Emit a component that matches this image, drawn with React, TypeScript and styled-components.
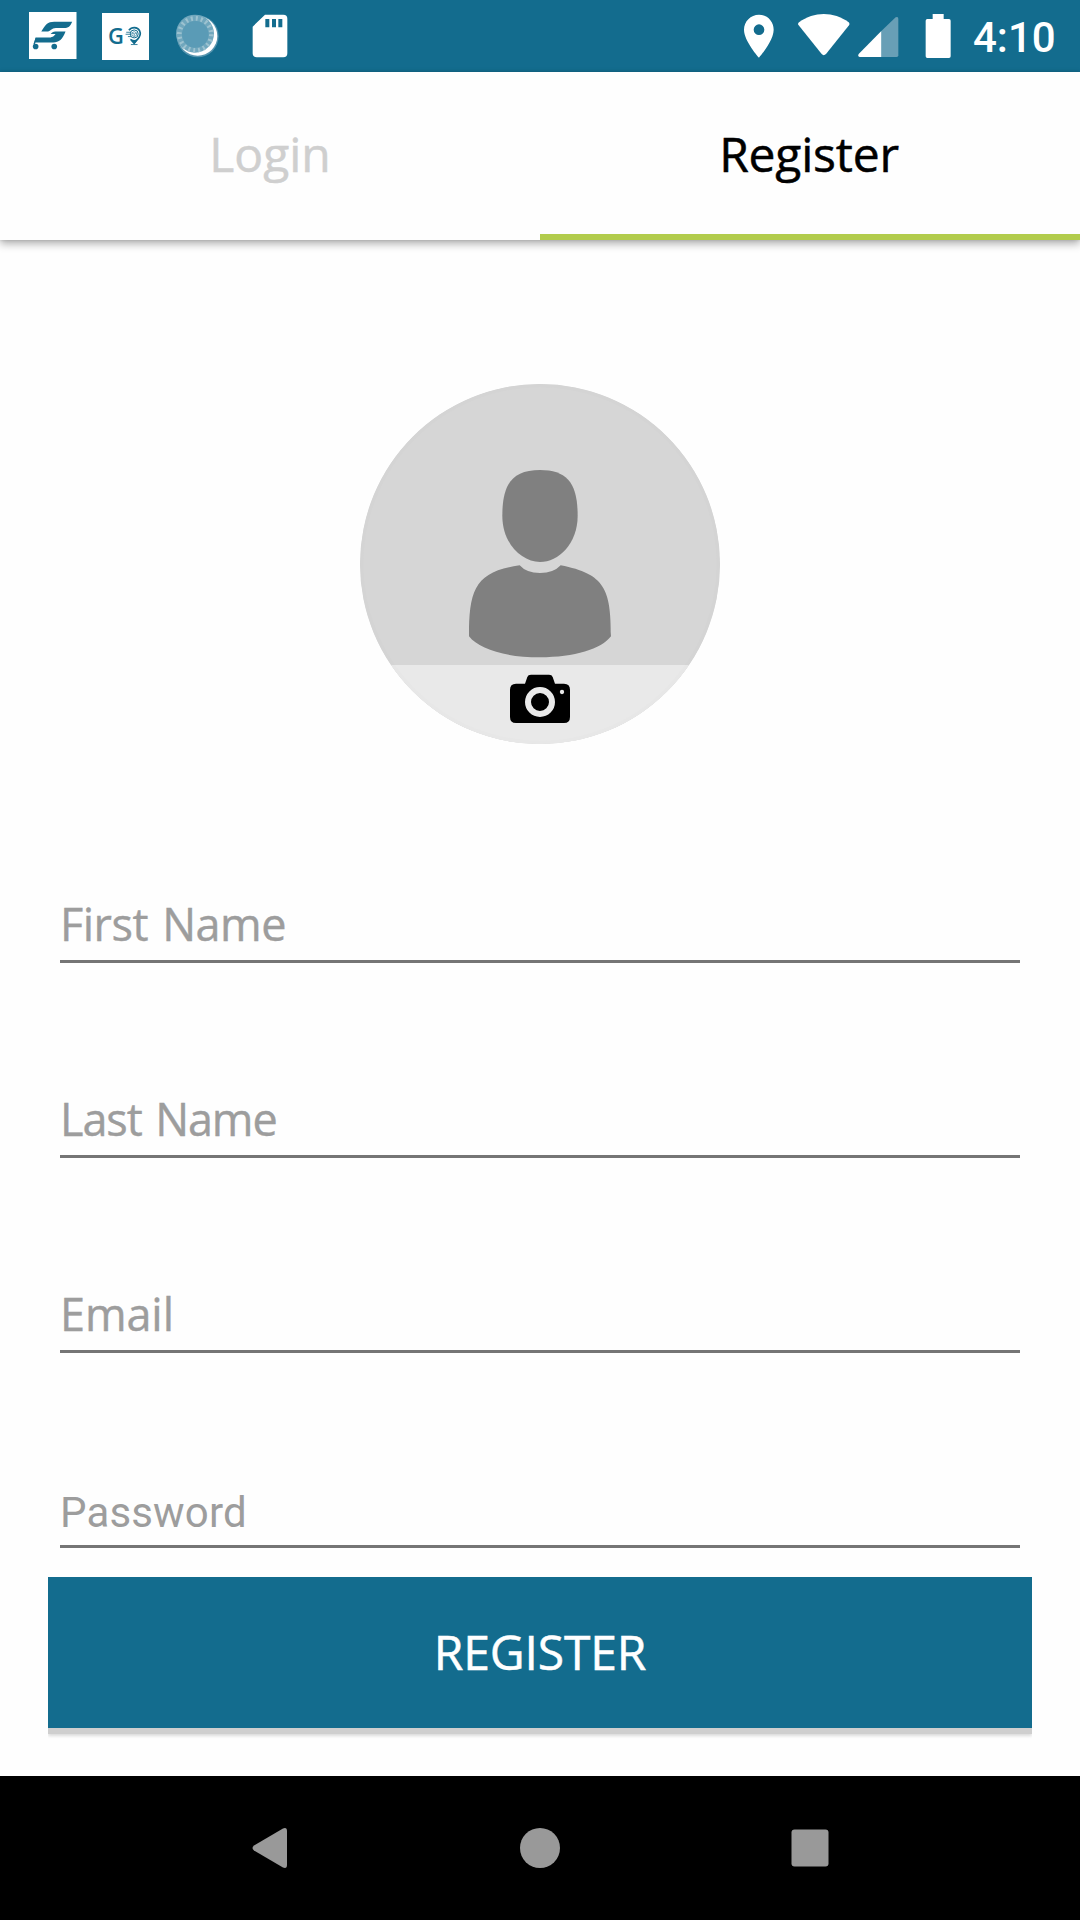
import React from 'react';
import styled, { createGlobalStyle } from 'styled-components';

const brand = '#136c8e';

const GlobalStyle = createGlobalStyle`
  * { box-sizing: border-box; }
  body { margin: 0; background: #fefefe; }
`;

const Screen = styled.div`
  width: 1080px;
  height: 1920px;
  display: flex;
  flex-direction: column;
  background: #fefefe;
  overflow: hidden;
  font-family: 'Open Sans', sans-serif;
`;

const StatusBar = styled.header`
  height: 72px;
  flex: none;
  display: flex;
  justify-content: space-between;
  padding: 0 25px 0 29px;
  background: ${brand};
  color: #fff;
`;

const StatusGroup = styled.div`
  display: flex;
  align-items: flex-start;
`;

const StatusIcon = styled.svg<{ $top: number; $left?: number }>`
  display: block;
  flex: none;
  margin-top: ${(p) => p.$top}px;
  margin-left: ${(p) => p.$left ?? 0}px;
`;

const Clock = styled.time`
  width: 82px;
  margin-left: 22.5px;
  font: 500 42px/72px Roboto, sans-serif;
  padding-top: 2px;
  white-space: nowrap;
`;

const Tabs = styled.nav`
  height: 168px;
  flex: none;
  display: grid;
  grid-template-columns: 1fr 1fr;
  background: #fefefe;
  box-shadow: 0 4px 8px rgba(0, 0, 0, 0.3), 0 0 3px rgba(0, 0, 0, 0.15);
`;

const Tab = styled.button<{ $active?: boolean; $spacing: number }>`
  border: 0;
  border-bottom: 6px solid ${(p) => (p.$active ? '#b2cc4c' : 'transparent')};
  padding: 2px ${(p) => (p.$active ? 2 : 0)}px 0 0;
  background: none;
  color: ${(p) => (p.$active ? '#000' : '#cfcfcf')};
  font: 400 48px/66px 'Open Sans', sans-serif;
  letter-spacing: ${(p) => p.$spacing}px;
  -webkit-text-stroke: 0.5px currentColor;
`;

const Content = styled.main`
  flex: 1;
  display: flex;
  flex-direction: column;
  align-items: center;
  padding-top: 144px;
`;

const Avatar = styled.div`
  width: 360px;
  height: 360px;
  flex: none;
  border-radius: 50%;
  overflow: hidden;
`;

const Form = styled.form`
  width: 984px;
  display: flex;
  flex-direction: column;
`;

const Fields = styled.div`
  display: flex;
  flex-direction: column;
  gap: 95px;
  padding: 119px 12px 29px;
`;

const Field = styled.input<{ $spacing: number; $wordGap?: number; $roboto?: boolean }>`
  display: block;
  width: 960px;
  height: 100px;
  border: 0;
  border-bottom: 3px solid #757575;
  border-radius: 0;
  outline: none;
  background: transparent;
  padding: ${(p) => (p.$roboto ? '31px 0 0' : '23px 0 0')};
  font-family: ${(p) => (p.$roboto ? 'Roboto' : "'Open Sans'")}, sans-serif;
  font-size: ${(p) => (p.$roboto ? 42 : 45)}px;
  letter-spacing: ${(p) => p.$spacing}px;
  word-spacing: ${(p) => p.$wordGap ?? 0}px;
  &::placeholder {
    color: #9d9d9d;
    opacity: 1;
    -webkit-text-stroke: ${(p) => (p.$roboto ? 0 : 0.4)}px #9d9d9d;
  }
`;

const Submit = styled.button`
  height: 151px;
  border: 0;
  padding: 0 0 2px;
  background: ${brand};
  color: #fff;
  font: 400 48px/66px 'Open Sans', sans-serif;
  letter-spacing: -0.15px;
  -webkit-text-stroke: 0.5px #fff;
  box-shadow: 0 6px 0 0 #cfcfcf, 0 8px 3px 0 rgba(0, 0, 0, 0.14);
  clip-path: inset(0 0 -16px 0);
`;

const NavBar = styled.footer`
  height: 144px;
  flex: none;
  display: grid;
  grid-template-columns: repeat(3, 270px);
  justify-content: center;
  align-items: center;
  justify-items: center;
  background: #000;
`;

const CartIcon = () => (
  <StatusIcon $top={11.5} $left={0.3} width={47.5} height={47.5} viewBox="88 34 143 143">
    <path fill="#fff" d="M88 34h143v143H88z" />
    <g fill={brand}>
      <path d="M125 93C137 72 144 63 164 63h54c-6 14-11 19-25 19h-24c-14 0-16 11-27 11z" />
      <path d="M108 111h36c14 0 19-4 24-11h-15c7-7 12-7 20-7h25c-9 24-20 33-37 33h-57z" />
      <circle cx="108" cy="138" r="8.500" />
      <circle cx="164" cy="138" r="8.500" />
    </g>
    <path d="M110 112l-7 20" stroke={brand} strokeWidth="4" />
  </StatusIcon>
);

const GoLabel = styled.text`
  font: 600 66px 'Open Sans', sans-serif;
  fill: ${brand};
`;

const GoIcon = () => (
  <StatusIcon $top={12.5} $left={25.2} width={47.5} height={47.5} viewBox="307 38 143 143">
    <path fill="#fff" d="M307 38h143v143H307z" />
    <GoLabel x="325" y="131">G</GoLabel>
    <g fill="none" stroke={brand} strokeWidth="5">
      <path d="M388 90c8-11 26-11 32 1 6 12 0 20-7 27l-9 11-10-11" />
      <circle cx="404" cy="101" r="12" strokeWidth="3" />
      <path d="M380 96h14M378 102h14M385 109h10M394 133h20" strokeWidth="2.500" />
      <path d="M397 98l7-4 7 4v7l-7 4-7-4zM397 98l7 3 7-3M404 101v8" strokeWidth="1.800" />
    </g>
    <path fill={brand} d="M390 115q14 9 28 0l-14 17z" />
  </StatusIcon>
);

const SpinnerIcon = () => (
  <StatusIcon $top={13} $left={25.5} width={45} height={45} viewBox="526 39 135 135">
    <circle cx="594" cy="109" r="63" fill="#5695af" />
    <circle cx="594" cy="108" r="59" fill="#fff" />
    <circle cx="586" cy="101" r="57" fill="#70a7bd" />
    <circle cx="587" cy="103" r="48" fill="none" stroke="#9cc2d0" strokeWidth="14" strokeDasharray="6 9.080" />
    <circle cx="587" cy="103" r="40" fill="#5a9bb6" />
  </StatusIcon>
);

const SdCardIcon = () => (
  <StatusIcon $top={14} $left={32} width={36} height={44} viewBox="757 42 108 132">
    <path
      fill="#fff"
      fillRule="evenodd"
      d="M796 44h55q12 0 12 12v104q0 12-12 12h-80q-12 0-12-12V80zM797 57v25h12V57zM817 57v25h12V57zM836 57v25h12V57z"
    />
  </StatusIcon>
);

const PinIcon = () => (
  <StatusIcon $top={14} width={32} height={44} viewBox="68 43 96 132">
    <path fill="#fff" fillRule="evenodd" d="M116 45c-25 0-45 20-45 45 0 34 45 84 45 84s44-50 44-84c0-25-19-45-44-45zm0 29a16 16 0 1 1 0 32 16 16 0 0 1 0-32z" />
  </StatusIcon>
);

const WifiIcon = () => (
  <StatusIcon $top={14} $left={22} width={54} height={42} viewBox="230 42 162 126">
    <path fill="#fff" d="M236 67c45-33 104-33 149 0q4 4 1 9l-69 86q-7 7-13 0L235 76q-4-5 1-9z" />
  </StatusIcon>
);

const SignalIcon = () => (
  <StatusIcon $top={15.5} $left={6} width={43} height={42} viewBox="410 48 129 126">
    <path fill="#689fb6" d="M483 93l43-41q8-4 8 5v109q0 5-5 5h-46z" />
    <path fill="#fff" d="M483 93v78h-65q-7-2-3-9z" />
  </StatusIcon>
);

const BatteryIcon = () => (
  <StatusIcon $top={14} $left={25} width={26} height={44} viewBox="613 42 78 132">
    <path fill="#fff" d="M636 42h33v15h16q5 0 5 5v107q0 5-5 5h-65q-5 0-5-5V62q0-5 5-5h16z" />
  </StatusIcon>
);

const AvatarArt = () => (
  <svg width="360" height="360" viewBox="60 42 1080 1080" display="block">
    <path fill="#d6d6d6" d="M60 42h1080v1080H60z" />
    <circle cx="600" cy="582" r="535" fill="none" stroke="#d4d4d4" strokeWidth="10" />
    <g fill="#808080">
      <path d="M600 300c82 0 113 41 113 137 0 84-58 139-113 139s-113-55-113-139c0-96 31-137 113-137z" />
      <path d="M539 586q20 23 61 23t62-23c133 26 151 72 151 213-29 38-109 63-213 63s-184-25-213-63c0-141 19-194 152-213z" />
    </g>
    <path fill="#e9e9e9" d="M60 885h1080v237H60z" />
    <path d="M65 582a535 535 0 0 0 1070 0" fill="none" stroke="#e7e7e7" strokeWidth="10" clipPath="url(#lower)" />
    <clipPath id="lower"><path d="M60 885h1080v237H60z" /></clipPath>
    <path d="M573 914h54q9 0 11 7l7 20h27q18 0 18 18v82q0 18-18 18H528q-18 0-18-18v-82q0-18 18-18h27l7-20q2-7 11-7z" />
    <circle cx="600" cy="996" r="36" fill="none" stroke="#e9e9e9" strokeWidth="18" />
    <circle cx="666" cy="966" r="6.500" fill="#e9e9e9" />
  </svg>
);

export default function App() {
  return (
    <Screen>
      <GlobalStyle />
      <StatusBar>
        <StatusGroup>
          <CartIcon />
          <GoIcon />
          <SpinnerIcon />
          <SdCardIcon />
        </StatusGroup>
        <StatusGroup>
          <PinIcon />
          <WifiIcon />
          <SignalIcon />
          <BatteryIcon />
          <Clock>4:10</Clock>
        </StatusGroup>
      </StatusBar>
      <Tabs>
        <Tab $spacing={0}>Login</Tab>
        <Tab $active $spacing={-0.2}>Register</Tab>
      </Tabs>
      <Content>
        <Avatar><AvatarArt /></Avatar>
        <Form>
          <Fields>
            <Field placeholder="First Name" $spacing={-0.5} $wordGap={3} />
            <Field placeholder="Last Name" $spacing={-1.1} $wordGap={3} />
            <Field placeholder="Email" $spacing={-0.1} />
            <Field type="password" placeholder="Password" $roboto $spacing={0.15} />
          </Fields>
          <Submit type="button">REGISTER</Submit>
        </Form>
      </Content>
      <NavBar>
        <svg width="36" height="42" viewBox="0 0 36 42">
          <path fill="#999" d="M2 18.500L31 1.500q4-1.500 4 2.500v34q0 4-4 2.500L2 23.500q-3-2.500 0-5z" />
        </svg>
        <svg width="42" height="42"><circle cx="21" cy="21" r="20" fill="#999" /></svg>
        <svg width="38" height="38"><rect x=".5" y=".5" width="37" height="37" rx="3" fill="#999" /></svg>
      </NavBar>
    </Screen>
  );
}
